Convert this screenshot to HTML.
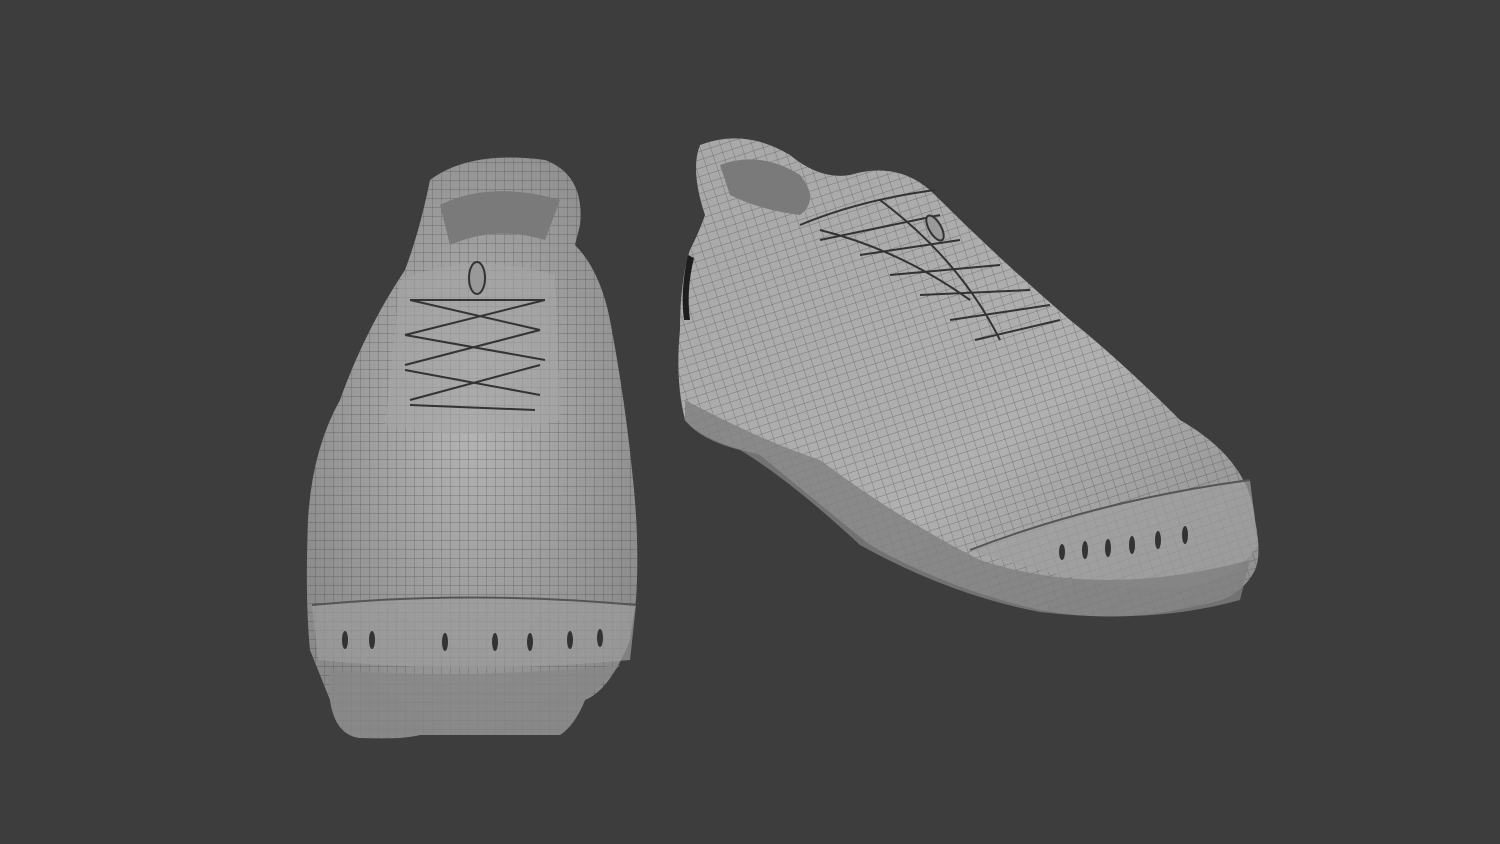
<!DOCTYPE html>
<html><head><style>
html,body{margin:0;padding:0;background:#3d3d3d;width:1500px;height:844px;overflow:hidden}
svg{display:block}
</style></head><body>
<svg width="1500" height="844" viewBox="0 0 1500 844" xmlns="http://www.w3.org/2000/svg">
<defs>
<pattern id="g" width="9" height="9" patternUnits="userSpaceOnUse">
<path d="M0 0H9M0 0V9" stroke="#2a2a2a" stroke-width="0.7" fill="none" opacity="0.55"/>
</pattern>
<pattern id="g2" width="10" height="8" patternUnits="userSpaceOnUse" patternTransform="rotate(-18)">
<path d="M0 0H10M0 0V8" stroke="#2a2a2a" stroke-width="0.7" fill="none" opacity="0.55"/>
</pattern>
<radialGradient id="lg" cx="0.5" cy="0.45" r="0.6">
<stop offset="0" stop-color="#b4b4b4"/><stop offset="1" stop-color="#8a8a8a"/>
</radialGradient>
<linearGradient id="rg" x1="0" y1="0" x2="1" y2="1">
<stop offset="0" stop-color="#a8a8a8"/><stop offset="0.6" stop-color="#b0b0b0"/><stop offset="1" stop-color="#8c8c8c"/>
</linearGradient>
</defs>
<rect width="1500" height="844" fill="#3d3d3d"/>

<!-- LEFT SHOE -->
<g>
<path d="M430 180 Q470 150 545 160 Q585 175 580 225 L575 245 Q600 270 610 320 Q625 400 632 470 Q640 540 636 600 L630 640 Q610 690 585 700 Q575 725 560 735 L420 735 Q400 740 360 738 Q335 735 330 700 L310 650 Q305 600 308 520 Q312 450 340 400 Q365 330 405 270 Q420 230 430 180 Z" fill="url(#lg)"/>
<path d="M430 180 Q470 150 545 160 Q585 175 580 225 L575 245 Q600 270 610 320 Q625 400 632 470 Q640 540 636 600 L630 640 Q610 690 585 700 Q575 725 560 735 L420 735 Q400 740 360 738 Q335 735 330 700 L310 650 Q305 600 308 520 Q312 450 340 400 Q365 330 405 270 Q420 230 430 180 Z" fill="url(#g)"/>
<!-- toe cap band -->
<path d="M312 605 Q470 590 636 605 L630 660 Q470 675 318 660 Z" fill="#9c9c9c" opacity="0.7"/>
<path d="M312 605 Q470 590 636 605" stroke="#555" stroke-width="2" fill="none"/>
<!-- sole -->
<path d="M330 670 Q470 680 620 665 L585 700 Q575 725 560 735 L420 735 L360 738 Q335 735 330 700Z" fill="#878787" opacity="0.8"/>
<!-- collar inner -->
<path d="M440 205 Q490 180 560 200 L545 240 Q495 225 450 245 Z" fill="#7a7a7a"/>
<!-- laces area -->
<path d="M400 280 Q470 250 555 275 L560 420 Q480 445 385 425 Z" fill="#a5a5a5" opacity="0.6"/>
<g stroke="#333" stroke-width="2" fill="none">
<path d="M410 300 L545 300 M410 300 L540 330 M405 335 L545 300 M405 335 L545 360 M405 365 L540 330 M405 370 L540 395 M410 400 L540 365 M410 405 L535 410"/>
</g>
<ellipse cx="477" cy="278" rx="8" ry="16" fill="#999" stroke="#333" stroke-width="2"/>
<g fill="#333">
<ellipse cx="345" cy="640" rx="3" ry="9"/><ellipse cx="372" cy="640" rx="3" ry="9"/><ellipse cx="445" cy="642" rx="3" ry="9"/><ellipse cx="495" cy="642" rx="3" ry="9"/><ellipse cx="530" cy="642" rx="3" ry="9"/><ellipse cx="570" cy="640" rx="3" ry="9"/><ellipse cx="600" cy="638" rx="3" ry="9"/>
</g>
</g>

<!-- RIGHT SHOE -->
<g>
<path d="M700 145 Q745 128 790 155 Q820 180 850 175 Q900 160 935 195 Q1000 260 1070 320 Q1120 360 1180 420 Q1250 460 1255 520 Q1262 555 1255 570 Q1240 600 1200 605 Q1120 625 1040 610 Q950 590 870 545 Q790 480 760 455 Q700 440 685 420 Q675 380 680 330 Q680 280 690 250 Q700 230 705 215 Q690 170 700 145 Z" fill="url(#rg)"/>
<path d="M700 145 Q745 128 790 155 Q820 180 850 175 Q900 160 935 195 Q1000 260 1070 320 Q1120 360 1180 420 Q1250 460 1255 520 Q1262 555 1255 570 Q1240 600 1200 605 Q1120 625 1040 610 Q950 590 870 545 Q790 480 760 455 Q700 440 685 420 Q675 380 680 330 Q680 280 690 250 Q700 230 705 215 Q690 170 700 145 Z" fill="url(#g2)"/>
<!-- toe cap -->
<path d="M970 550 Q1100 500 1250 480 L1258 545 Q1230 590 1150 590 Q1060 580 970 550Z" fill="#a0a0a0" opacity="0.7"/>
<path d="M970 550 Q1100 500 1250 480" stroke="#555" stroke-width="2" fill="none"/>
<!-- sole lower -->
<path d="M685 400 Q760 440 820 460 Q900 520 980 560 Q1100 600 1250 560 L1240 600 Q1150 625 1040 612 Q950 595 860 545 Q790 480 740 450 Q700 440 685 420Z" fill="#808080" opacity="0.8"/>
<!-- collar opening -->
<path d="M720 165 Q760 150 800 175 Q820 200 800 215 Q760 210 730 195 Z" fill="#7a7a7a"/>
<!-- dark side detail -->
<path d="M688 255 Q680 290 684 320 L690 320 Q686 290 694 258Z" fill="#1e1e1e"/>
<g stroke="#333" stroke-width="2" fill="none">
<path d="M800 225 Q860 200 935 190 M820 240 L940 215 M860 255 L960 240 M890 275 L1000 265 M920 295 L1030 290 M950 320 L1050 305 M975 340 L1060 320"/>
<path d="M820 230 Q900 250 970 300 M880 200 Q960 260 1000 340"/>
</g>
<ellipse cx="935" cy="228" rx="6" ry="14" fill="#999" stroke="#333" stroke-width="2" transform="rotate(-30 935 228)"/>
<g fill="#333">
<ellipse cx="1062" cy="552" rx="3" ry="8"/><ellipse cx="1085" cy="550" rx="3" ry="9"/><ellipse cx="1108" cy="548" rx="3" ry="9"/><ellipse cx="1132" cy="545" rx="3" ry="9"/><ellipse cx="1158" cy="540" rx="3" ry="9"/><ellipse cx="1185" cy="535" rx="3" ry="9"/>
</g>
</g>
</svg>
</body></html>
